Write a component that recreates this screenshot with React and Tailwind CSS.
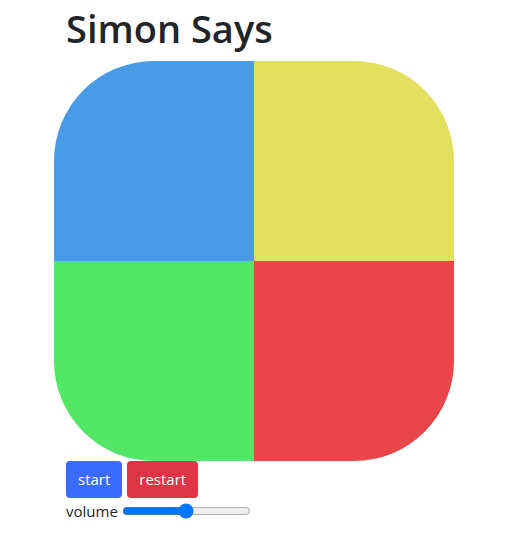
import { useState } from 'react'

const pads = [
  { id: 'blue', cls: 'bg-[#4a9be6] rounded-tl-[100px]' },
  { id: 'yellow', cls: 'bg-[#e3e05f] rounded-tr-[100px]' },
  { id: 'green', cls: 'bg-[#52e766] rounded-bl-[100px]' },
  { id: 'red', cls: 'bg-[#e9464b] rounded-br-[100px]' },
]

export default function App() {
  const [volume, setVolume] = useState(50)

  return (
    <div className="pl-[66px] text-[#212529] font-['Open_Sans','Noto_Sans',sans-serif]">
      <h1 className="text-[38px] leading-[48px] font-semibold pt-[4px] mb-[9px]">Simon Says</h1>
      <div className="-ml-[12px] grid grid-cols-2 w-[400px] h-[400px]">
        {pads.map((p) => (
          <div key={p.id} className={p.cls} />
        ))}
      </div>
      <div className="flex gap-[5px]">
        <button className="h-[37px] px-[12px] rounded-[4px] bg-[#3a6bff] text-white text-[15px]">start</button>
        <button className="h-[37px] px-[12px] rounded-[4px] bg-[#dc3545] text-white text-[15px]">restart</button>
      </div>
      <div className="flex items-center gap-[4px] mt-[2px] text-[15px]">
        <span>volume</span>
        <input
          type="range"
          min="0"
          max="100"
          value={volume}
          onChange={(e) => setVolume(e.target.value)}
          className="w-[129px]"
        />
      </div>
    </div>
  )
}
